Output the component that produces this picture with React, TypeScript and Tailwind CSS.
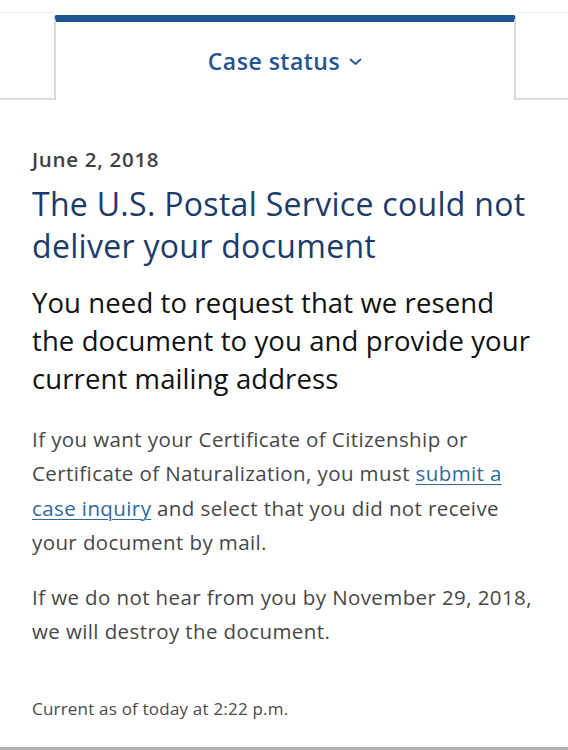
import React from "react";

export default function App() {
  const font = { fontFamily: "'Open Sans', 'Noto Sans', sans-serif" };
  return (
    <div className="w-[568px] h-[750px] bg-white flex flex-col" style={font}>
      <div className="flex h-[100px]">
        <div className="w-[54px] flex flex-col">
          <div className="h-[13px] border-b border-[#f0f0f0]"></div>
          <div className="flex-1 border-b-2 border-[#dcdcdc]"></div>
        </div>
        <div className="flex-1 mt-[15px] border-t-[7px] border-t-[#1f5493] border-x-2 border-x-[#d9d9d9] rounded-t-[3px] flex items-center justify-center">
          <span className="text-[23px] font-semibold tracking-[0.5px] text-[#245592]">Case status</span>
          <svg className="ml-[9px] mt-[2px]" width="13" height="8" viewBox="0 0 13 8" fill="none">
            <path d="M1.5 1.5 L6.5 6 L11.5 1.5" stroke="#245592" strokeWidth="1.8" strokeLinecap="round" strokeLinejoin="round" />
          </svg>
        </div>
        <div className="w-[52px] flex flex-col">
          <div className="h-[13px] border-b border-[#f0f0f0]"></div>
          <div className="flex-1 border-b-2 border-[#dcdcdc]"></div>
        </div>
      </div>
      <div className="flex-1 px-[32px] pt-[47px]">
        <div className="text-[20.5px] leading-[24px] font-semibold tracking-[0.7px] text-[#3f3f3f]">June 2, 2018</div>
        <h1 className="mt-[12px] text-[32px] leading-[42px] tracking-[0.3px] text-[#1b3b6b]">
          The U.S. Postal Service could not deliver your document
        </h1>
        <h2 className="mt-[17px] text-[27.5px] leading-[38px] tracking-[0.1px] text-[#111111]">
          You need to request that we resend the document to you and provide your current mailing address
        </h2>
        <p className="mt-[24px] text-[20.5px] leading-[34.3px] tracking-[0.4px] text-[#474747]">
          If you want your Certificate of Citizenship or Certificate of Naturalization, you must{" "}
          <a className="text-[#2f6a9d] underline underline-offset-[3px] decoration-[1px]" href="#">
            submit a case inquiry
          </a>{" "}
          and select that you did not receive your document by mail.
        </p>
        <p className="mt-[22px] text-[20.5px] leading-[33.5px] tracking-[0.4px] text-[#474747]">
          If we do not hear from you by November 29, 2018, we will destroy the document.
        </p>
        <div className="mt-[49px] text-[17px] leading-[24px] tracking-[0.2px] text-[#4a4a4a]">
          Current as of today at 2:22 p.m.
        </div>
      </div>
      <div className="h-[3px] bg-[#b3b3b3]"></div>
    </div>
  );
}
